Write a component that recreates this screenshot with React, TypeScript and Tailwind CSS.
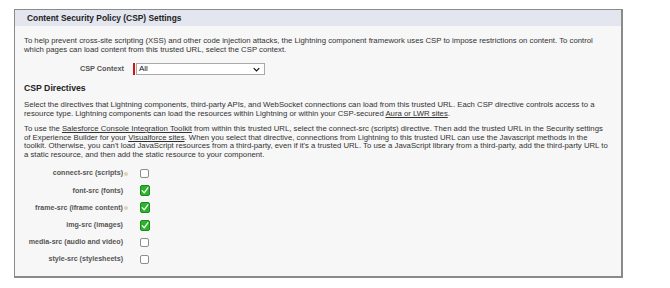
const directives = [
  { label: 'connect-src (scripts)', info: true, checked: false },
  { label: 'font-src (fonts)', info: false, checked: true },
  { label: 'frame-src (iframe content)', info: true, checked: true },
  { label: 'img-src (images)', info: false, checked: true },
  { label: 'media-src (audio and video)', info: false, checked: false },
  { label: 'style-src (stylesheets)', info: false, checked: false },
];

function Checkbox({ checked }: { checked: boolean }) {
  if (checked) {
    return (
      <span className="flex h-[11px] w-[10px] items-center justify-center rounded-[2px] border border-[#1e8a1e] bg-[#2cb52c]">
        <svg viewBox="0 0 10 10" className="h-[9px] w-[9px]">
          <path d="M1.5 5.2 L4 8 L8.6 1.6" fill="none" stroke="white" strokeWidth="1.6" strokeLinecap="round" strokeLinejoin="round" />
        </svg>
      </span>
    );
  }
  return <span className="block h-[9px] w-[9px] rounded-[2px] border border-[#8d8d8d] bg-white" />;
}

export default function App() {
  return (
    <div className="h-[288px] w-[670px] bg-white pl-[14px] pt-[9px] font-['Liberation_Sans',Arial,sans-serif]">
      <div className="h-[269px] w-[609px] border border-r-2 border-b-2 border-[#8a8a8a] bg-[#f7f7f7]">
        <div className="flex h-[16px] items-center bg-[#e3e6ef] pl-[12px] text-[8.4px] font-bold text-[#222]">
          Content Security Policy (CSP) Settings
        </div>
        <div className="whitespace-nowrap px-[9px] pt-[11px] text-[7.75px] leading-[8.5px] text-[#333]">
          <p>
            To help prevent cross-site scripting (XSS) and other code injection attacks, the Lightning component framework uses CSP to impose restrictions on content. To control
            <br />
            which pages can load content from this trusted URL, select the CSP context.
          </p>
          <div className="mt-[9px] flex items-center">
            <span className="w-[100px] text-right text-[7.3px] font-bold text-[#555]">CSP Context</span>
            <span className="ml-[9px] h-[12px] w-[2px] bg-[#d4141b]" />
            <div className="ml-px flex h-[12px] w-[129px] items-center justify-between border border-[#a9a9a9] bg-white pl-[2px] pr-[4px] text-[8px] text-[#111]">
              <span>All</span>
              <svg viewBox="0 0 10 6" className="h-[5px] w-[7px]">
                <path d="M1 1 L5 5 L9 1" fill="none" stroke="#111" strokeWidth="1.8" />
              </svg>
            </div>
          </div>
          <h2 className="mt-[8px] text-[8.7px] font-bold leading-[10px] text-[#222]">CSP Directives</h2>
          <p className="mt-[8px]">
            Select the directives that Lightning components, third-party APIs, and WebSocket connections can load from this trusted URL. Each CSP directive controls access to a
            <br />
            resource type. Lightning components can load the resources within Lightning or within your CSP-secured <span className="underline">Aura or LWR sites</span>.
          </p>
          <p className="mt-[7px]">
            To use the <span className="underline">Salesforce Console Integration Toolkit</span> from within this trusted URL, select the connect-src (scripts) directive. Then add the trusted URL in the Security settings
            <br />
            of Experience Builder for your <span className="underline">Visualforce sites</span>. When you select that directive, connections from Lightning to this trusted URL can use the Javascript methods in the
            <br />
            toolkit. Otherwise, you can't load JavaScript resources from a third-party, even if it's a trusted URL. To use a JavaScript library from a third-party, add the third-party URL to
            <br />
            a static resource, and then add the static resource to your component.
          </p>
          <div className="mt-[6px] flex flex-col">
            {directives.map((d) => (
              <div key={d.label} className="flex h-[17.2px] items-center">
                <span className="w-[99px] text-right text-[7.1px] font-bold text-[#555]">{d.label}</span>
                <span className="flex w-[6px] justify-center">
                  {d.info && <span className="h-[4px] w-[4px] rounded-full bg-[#e3cfb8]" />}
                </span>
                <span className="ml-[10px] flex w-[11px] justify-center">
                  <Checkbox checked={d.checked} />
                </span>
              </div>
            ))}
          </div>
        </div>
      </div>
    </div>
  );
}
